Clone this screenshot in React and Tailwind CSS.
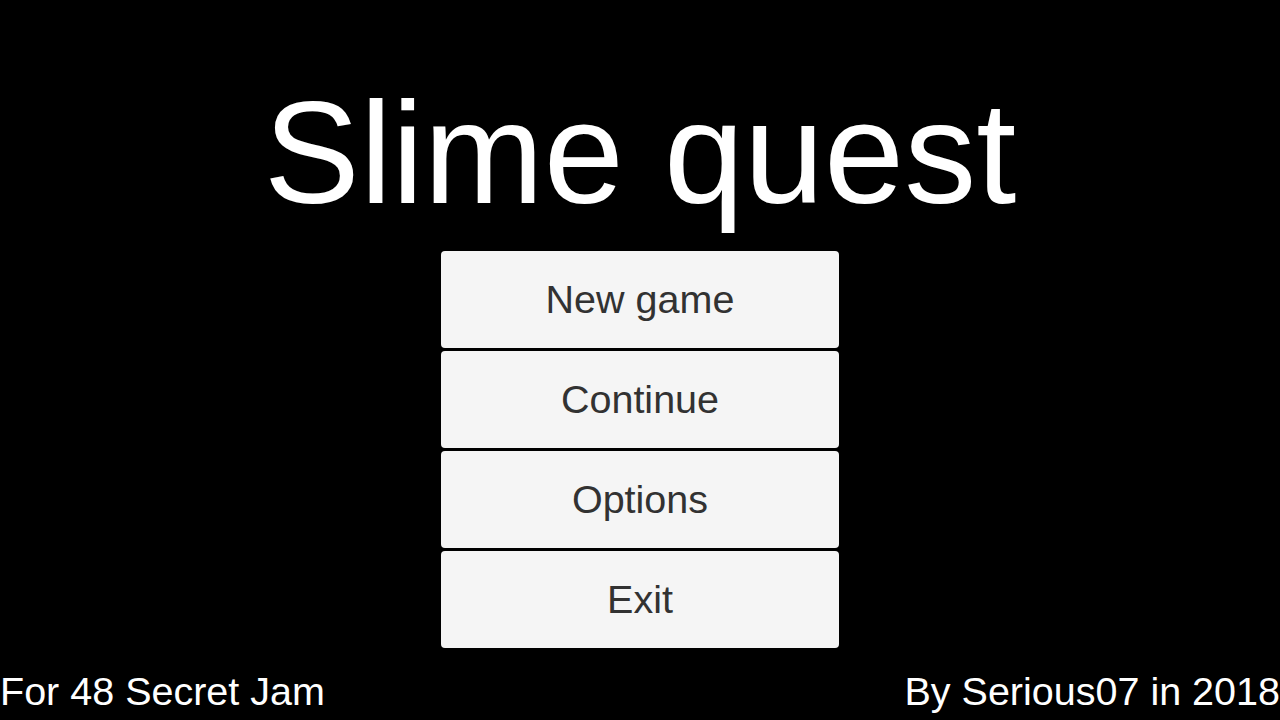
export default function App() {
  const items = ["New game", "Continue", "Options", "Exit"];
  return (
    <div
      className="w-[1280px] h-[720px] bg-black text-white flex flex-col overflow-hidden"
      style={{ fontFamily: '"Liberation Sans", Arial, sans-serif' }}
    >
      <div className="flex-1 flex flex-col items-center pt-[82px]">
        <h1 className="text-[144px] leading-none h-[144px] text-white">Slime quest</h1>
        <div className="mt-[25px] flex flex-col gap-[3px]">
          {items.map((t) => (
            <button
              key={t}
              className="w-[398px] h-[97px] bg-[#f5f5f5] rounded-[4px] text-[#323232] text-[39.5px] leading-none flex items-center justify-center"
            >
              {t}
            </button>
          ))}
        </div>
      </div>
      <div className="flex justify-between items-end text-[39.5px] leading-none pb-[9px] px-0">
        <span>For 48 Secret Jam</span>
        <span>By Serious07 in 2018</span>
      </div>
    </div>
  );
}
